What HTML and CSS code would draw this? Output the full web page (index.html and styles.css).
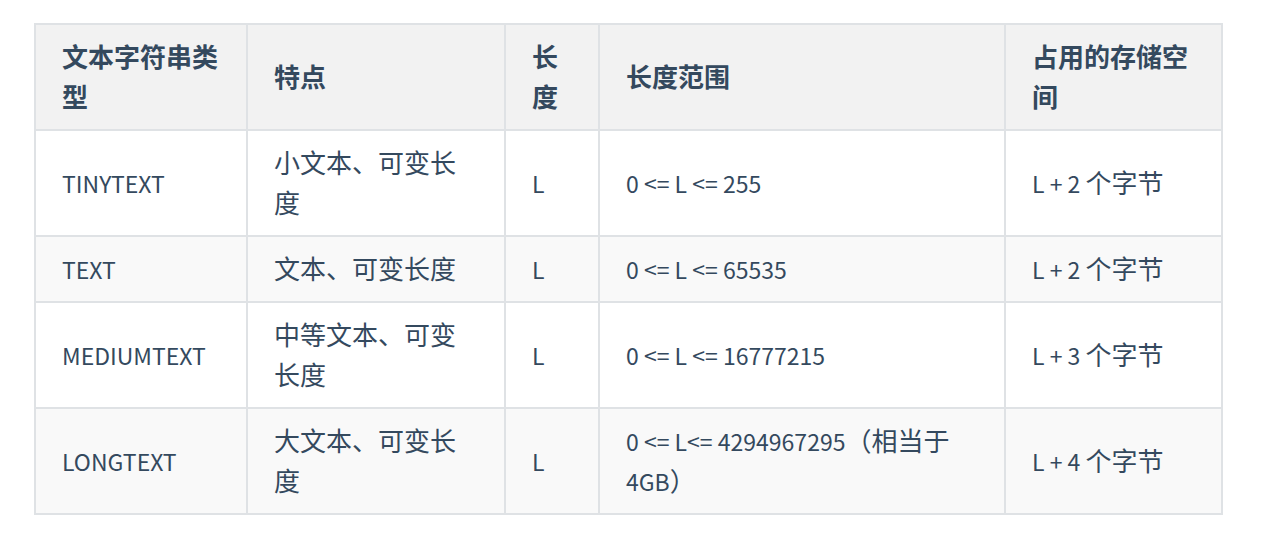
FILE: index.html
```html
<!DOCTYPE html>
<html lang="zh-CN">
<head>
<meta charset="utf-8">
<link rel="stylesheet" href="styles.css">
</head>
<body>
<table class="types">
  <colgroup>
    <col class="c1"><col class="c2"><col class="c3"><col class="c4"><col class="c5">
  </colgroup>
  <thead>
    <tr>
      <th>文本字符串类型</th>
      <th>特点</th>
      <th>长度</th>
      <th>长度范围</th>
      <th>占用的存储空间</th>
    </tr>
  </thead>
  <tbody>
    <tr>
      <td><span class="lat">TINYTEXT</span></td>
      <td>小文本、可变长度</td>
      <td><span class="lat">L</span></td>
      <td><span class="lat">0 &lt;= L &lt;= 255</span></td>
      <td><span class="lat">L + 2 </span>个字节</td>
    </tr>
    <tr>
      <td><span class="lat">TEXT</span></td>
      <td>文本、可变长度</td>
      <td><span class="lat">L</span></td>
      <td><span class="lat">0 &lt;= L &lt;= 65535</span></td>
      <td><span class="lat">L + 2 </span>个字节</td>
    </tr>
    <tr>
      <td><span class="lat">MEDIUMTEXT</span></td>
      <td>中等文本、可变长度</td>
      <td><span class="lat">L</span></td>
      <td><span class="lat">0 &lt;= L &lt;= 16777215</span></td>
      <td><span class="lat">L + 3 </span>个字节</td>
    </tr>
    <tr>
      <td><span class="lat">LONGTEXT</span></td>
      <td>大文本、可变长度</td>
      <td><span class="lat">L</span></td>
      <td><span class="lat">0 &lt;= L&lt;= 4294967295</span>（相当于<span class="lat">4GB</span>）</td>
      <td><span class="lat">L + 4 </span>个字节</td>
    </tr>
  </tbody>
</table>
</body>
</html>
```
FILE: styles.css
```css
html, body {
  margin: 0;
  background: #ffffff;
}
body {
  padding: 23px 0 0 34px;
  font-family: "Noto Sans CJK SC", "Noto Sans", sans-serif;
  font-size: 26px;
  line-height: 40px;
  color: #34495e;
}
.lat {
  font-size: 23px;
  line-height: 1;
}
.types {
  border-collapse: collapse;
  table-layout: fixed;
  width: 1187px;
}
.c1 { width: 212px; }
.c2 { width: 258px; }
.c3 { width: 94px; }
.c4 { width: 406px; }
.c5 { width: 217px; }
.types th,
.types td {
  border: 2px solid #dfe2e5;
  padding: 11px 26px 13px;
  text-align: left;
  vertical-align: middle;
}
.types th {
  font-weight: 700;
  background: #f2f2f2;
}
.types tbody tr:nth-child(2n) td {
  background: #f9f9f9;
}
```
